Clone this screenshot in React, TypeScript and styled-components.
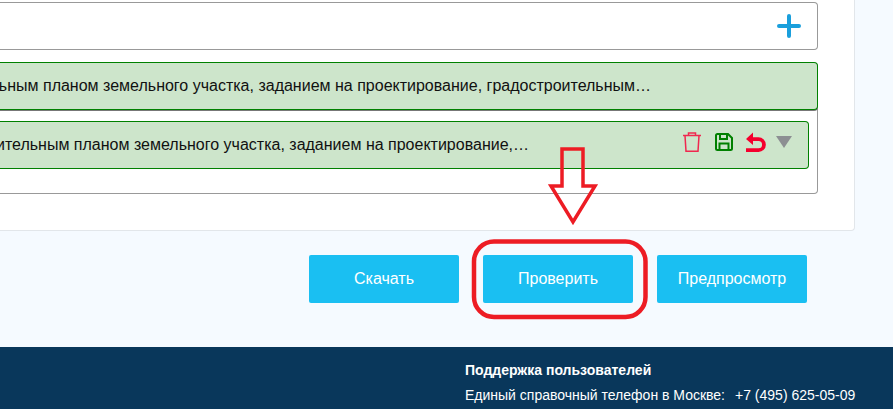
import React from 'react';
import styled, { createGlobalStyle } from 'styled-components';

const GlobalStyle = createGlobalStyle`
  html, body {
    margin: 0;
    padding: 0;
    background: #f5faff;
    font-family: "Liberation Sans", Arial, sans-serif;
  }
`;

const Page = styled.div`
  position: relative;
  width: 893px;
  height: 409px;
  overflow: hidden;
  display: flex;
  flex-direction: column;
`;

const Card = styled.section`
  box-sizing: border-box;
  width: 875px;
  height: 231px;
  margin-left: -20px;
  padding: 2px 36px 0 0;
  background: #fff;
  border-right: 1px solid #e2e6ea;
  border-bottom: 1px solid #e2e6ea;
  border-bottom-right-radius: 4px;
  display: flex;
  flex-direction: column;
`;

const AddRow = styled.div`
  box-sizing: border-box;
  height: 48px;
  margin-bottom: 12px;
  padding-right: 16px;
  border: 1px solid #999;
  border-left: none;
  border-radius: 0 4px 4px 0;
  display: flex;
  align-items: center;
  justify-content: flex-end;
`;

const GreenRow = styled.div<{ $pad: number }>`
  box-sizing: border-box;
  height: 48px;
  padding-right: ${(p) => p.$pad}px;
  background: #cde5cb;
  border: 1px solid #008000;
  border-left: none;
  border-radius: 0 4px 4px 0;
  display: flex;
  align-items: center;
  overflow: hidden;
`;

const TopGreenRow = styled(GreenRow)`
  position: relative;
  z-index: 1;
  box-shadow: 0 1px 0 #777;
`;

const Nested = styled.div`
  box-sizing: border-box;
  height: 85px;
  margin-top: -1px;
  padding: 11px 8px 0 0;
  border: 1px solid #999;
  border-left: none;
  border-radius: 0 0 4px 4px;
`;

const RowText = styled.div<{ $gap: number }>`
  flex: 1;
  min-width: 0;
  margin-right: ${(p) => p.$gap}px;
  display: flex;
  justify-content: flex-end;
  color: #111;
  font-size: 16px;
  white-space: nowrap;
`;

const Icons = styled.div`
  display: flex;
  align-items: center;
  gap: 13px;
  margin-bottom: 6px;
`;

const Caret = styled.svg`
  margin-left: -3px;
`;

const Actions = styled.div`
  display: flex;
  justify-content: flex-end;
  gap: 24px;
  padding: 24px 86px 0 0;
`;

const ActionButton = styled.button`
  width: 150px;
  height: 48px;
  padding: 0;
  border: none;
  border-radius: 2px;
  background: #1abff2;
  color: #fff;
  font-family: inherit;
  font-size: 16px;
`;

const Footer = styled.footer`
  box-sizing: border-box;
  flex: 1;
  margin-top: 44px;
  padding: 15px 0 0 465px;
  background: #09375b;
  color: #fff;
  font-size: 14px;
`;

const FooterTitle = styled.div`
  margin-bottom: 9px;
  font-size: 14px;
  font-weight: 700;
  line-height: 16px;
`;

const FooterLine = styled.div`
  display: flex;
  gap: 10px;
  line-height: 16px;
`;

const Annotation = styled.svg`
  position: absolute;
  top: 0;
  left: 0;
  pointer-events: none;
`;

const App: React.FC = () => (
  <Page>
    <GlobalStyle />
    <Card>
      <AddRow>
        <svg width="24" height="24" viewBox="0 0 24 24">
          <path d="M12 2v20M2 12h20" stroke="#1a9fdc" strokeWidth="4" strokeLinecap="round" />
        </svg>
      </AddRow>
      <TopGreenRow $pad={166}>
        <RowText $gap={0}>
          градостроительным планом земельного участка, заданием на проектирование, градостроительным…
        </RowText>
      </TopGreenRow>
      <Nested>
        <GreenRow $pad={16}>
          <RowText $gap={154}>
            градостроительным планом земельного участка, заданием на проектирование,…
          </RowText>
          <Icons>
            <svg width="19" height="20" viewBox="0 0 19 20" fill="none" stroke="#f0284f" strokeWidth="1.500">
              <path d="M0 3.600h18M2 3.600l1 15.700h12l1-15.700M5.500 3.600V.9h7v2.700" />
            </svg>
            <svg width="18" height="18" viewBox="0 0 18 18" fill="none" stroke="#008000" strokeWidth="2">
              <path d="M2.500 1h10.500l4 4v10.500a1.500 1.500 0 0 1-1.500 1.500h-13A1.500 1.500 0 0 1 1 15.500v-13A1.500 1.500 0 0 1 2.500 1z" />
              <path d="M5 1.500v4.500h7V1.500M4.500 17v-6.500h9V17" />
            </svg>
            <svg width="20" height="20" viewBox="0 0 20 20">
              <path d="M0 7 7 .5v4.800h5.500a7.350 7.350 0 0 1 0 14.700H0v-3.800h12.500a3.550 3.550 0 0 0 0-7.100H7V13z" fill="#f5002d" />
            </svg>
            <Caret width="16" height="12" viewBox="0 0 16 12">
              <path d="M0 0h16L8 12z" fill="#8c8f92" />
            </Caret>
          </Icons>
        </GreenRow>
      </Nested>
    </Card>
    <Actions>
      <ActionButton>Скачать</ActionButton>
      <ActionButton>Проверить</ActionButton>
      <ActionButton>Предпросмотр</ActionButton>
    </Actions>
    <Footer>
      <FooterTitle>Поддержка пользователей</FooterTitle>
      <FooterLine>
        <span>Единый справочный телефон в Москве:</span>
        <span>+7 (495) 625-05-09</span>
      </FooterLine>
    </Footer>
    <Annotation width="893" height="409" viewBox="0 0 893 409" fill="none" stroke="#ed1c24" strokeWidth="4.500">
      <rect x="474" y="241.500" width="171.500" height="75.500" rx="20" />
      <path d="M562 149h21v37h12l-22 36-22-36h11z" strokeWidth="3.500" />
    </Annotation>
  </Page>
);

export default App;
